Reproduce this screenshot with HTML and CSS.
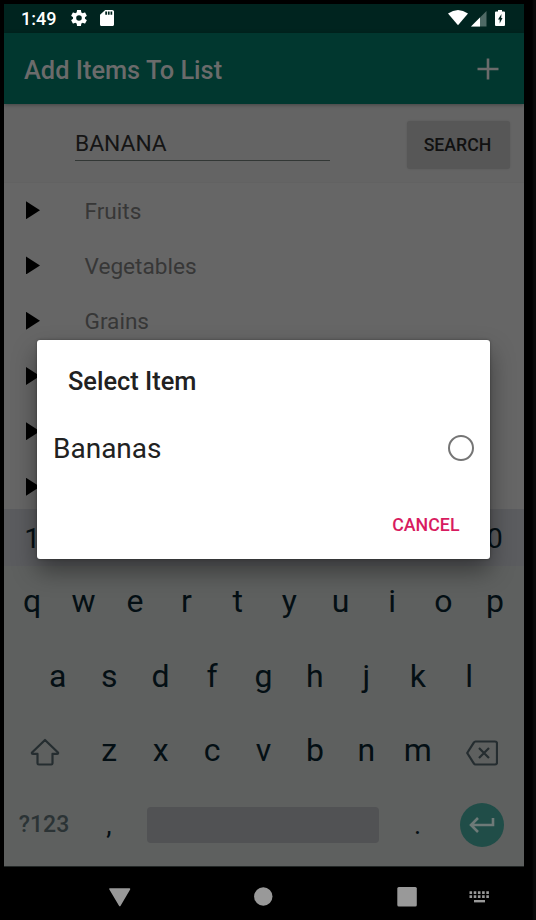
FILE: index.html
```html
<!DOCTYPE html>
<html lang="en">
<head>
<meta charset="utf-8">
<title>Add Items To List</title>
<link rel="stylesheet" href="styles.css">
</head>
<body>
<div class="phone">
  <header class="status">
    <span class="clock">1:49</span>
    <svg class="gear" width="20" height="20" viewBox="2 2 20 20"><path d="M19.43 12.98c.04-.32.07-.64.07-.98s-.03-.66-.07-.98l2.11-1.65c.19-.15.24-.42.12-.64l-2-3.46c-.12-.22-.39-.3-.61-.22l-2.49 1c-.52-.4-1.08-.73-1.69-.98l-.38-2.65C14.46 2.18 14.25 2 14 2h-4c-.25 0-.46.18-.49.42l-.38 2.65c-.61.25-1.17.59-1.69.98l-2.49-1c-.23-.09-.49 0-.61.22l-2 3.46c-.13.22-.07.49.12.64l2.11 1.65c-.04.32-.07.65-.07.98s.03.66.07.98l-2.11 1.65c-.19.15-.24.42-.12.64l2 3.46c.12.22.39.3.61.22l2.49-1c.52.4 1.08.73 1.69.98l.38 2.65c.03.24.24.42.49.42h4c.25 0 .46-.18.49-.42l.38-2.65c.61-.25 1.17-.59 1.69-.98l2.49 1c.23.09.49 0 .61-.22l2-3.46c.12-.22.07-.49-.12-.64zM12 15.5a3.5 3.5 0 1 1 0-7 3.5 3.5 0 0 1 0 7z"/></svg>
    <svg class="sd" width="14" height="16" viewBox="4 2 16 20" preserveAspectRatio="none"><path d="M18 2h-8L4.020 8 4 20c0 1.100.9 2 2 2h12c1.100 0 2-.9 2-2V4c0-1.100-.9-2-2-2zm-6 6h-2V4h2zm3 0h-2V4h2zm3 0h-2V4h2z"/></svg>
    <svg class="wifi" width="20" height="16" viewBox="0 0 20 16"><path d="M0 3.600Q10-3.400 20 3.600L10 15.300z"/></svg>
    <svg class="cell" width="16" height="16" viewBox="0 0 16 16"><path class="faint" d="M15.500 0v15.500H0z"/><path d="M9 6.500v9H0z"/></svg>
    <svg class="battery" width="10" height="17" viewBox="0 0 10 17"><path fill-rule="evenodd" d="M3 0h4v1.500h2q1 0 1 1V15q0 1-1 1H1q-1 0-1-1V2.500q0-1 1-1h2zM6.500 4 3 9.500h1.700v4L7.500 8H6.200z"/></svg>
  </header>
  <div class="appbar">
    <h1>Add Items To List</h1>
    <svg width="22" height="22" viewBox="0 0 22 22"><path d="M11 .5v21M.5 11h21"/></svg>
  </div>
  <div class="search">
    <div class="field">BANANA</div>
    <div class="button">SEARCH</div>
  </div>
  <ul class="list">
    <li><i></i><span>Fruits</span></li>
    <li><i></i><span>Vegetables</span></li>
    <li><i></i><span>Grains</span></li>
    <li><i></i></li>
    <li><i></i></li>
    <li><i></i></li>
  </ul>
  <div class="keyboard">
    <div class="keys digits"><span>1</span><span></span><span></span><span></span><span></span><span></span><span></span><span></span><span></span><span>0</span></div>
    <div class="keys"><span>q</span><span>w</span><span>e</span><span>r</span><span>t</span><span>y</span><span>u</span><span>i</span><span>o</span><span>p</span></div>
    <div class="keys middle"><span>a</span><span>s</span><span>d</span><span>f</span><span>g</span><span>h</span><span>j</span><span>k</span><span>l</span></div>
    <div class="keys">
      <span class="wide shift"><svg width="30" height="28" viewBox="0 0 30 28"><path d="M15 2 2 14.500Q1.500 15.800 3 15.800H7.500V25.200Q7.500 26.500 8.800 26.500H21.200Q22.500 26.500 22.500 25.200V15.800H27Q28.500 15.800 28 14.500z"/></svg></span>
      <span>z</span><span>x</span><span>c</span><span>v</span><span>b</span><span>n</span><span>m</span>
      <span class="wide erase"><svg width="32" height="26" viewBox="0 0 32 26"><path d="M9.500 1.500H29Q31 1.500 31 3.500V22.500Q31 24.500 29 24.500H9.500Q8.500 24.500 7.800 23.400L1.200 13 7.800 2.600Q8.500 1.500 9.500 1.500zM13 8l10 10M23 8 13 18"/></svg></span>
    </div>
    <div class="keys bottom">
      <span class="symbols">?123</span>
      <span class="comma">,</span>
      <span class="space"></span>
      <span class="dot">.</span>
      <span class="enter"><svg width="26" height="16" viewBox="0 0 26 16"><path d="M24 1v7H2.500M9 1 2 8l7 7"/></svg></span>
    </div>
  </div>
  <nav class="nav">
    <svg width="390" height="22" viewBox="0 0 390 22">
      <path d="M1 3H20.500L10.800 19.500z" stroke-width="1.500" stroke-linejoin="round"/>
      <circle cx="154.300" cy="10.500" r="9.200"/>
      <rect x="288.300" y="1" width="19.500" height="19.500" rx="1.500"/>
      <path class="dots" d="M360.500 6.600h20M360.500 10.600h20"/>
      <path class="bar" d="M365 15.200h11"/>
    </svg>
  </nav>
  <div class="dialog">
    <h2>Select Item</h2>
    <div class="option"><span>Bananas</span><i></i></div>
    <div class="cancel">CANCEL</div>
  </div>
</div>
</body>
</html>
```
FILE: styles.css
```css
* { box-sizing: border-box; }
body { margin: 0; background: #000; font-family: Roboto, "Liberation Sans", sans-serif; }
h1, h2, ul { margin: 0; padding: 0; }
.phone { position: relative; width: 536px; height: 920px; padding: 4px 12px 0 4px; overflow: hidden; background: linear-gradient(90deg, #000 532px, #0a0a0a 534px); }

.status { display: flex; height: 29px; padding: 6px 19px 0 17px; background: #00241f; color: #fff; fill: #fff; }
.clock { width: 50px; font-size: 18px; line-height: 18px; font-weight: 500; white-space: nowrap; }
.gear { width: 16px; height: 16px; }
.sd { margin: 0 0 0 13px; }
.wifi { margin-left: auto; }
.cell { margin: 1px 8px 0 3px; }
.faint { fill: #4f6965; }

.appbar { display: flex; align-items: center; justify-content: space-between; height: 71px; padding: 0 25px 0 20px; background: #01372f; color: #6b6b6b; position: relative; box-shadow: 0 1px 4px #0005; }
.appbar h1 { font-size: 25.4px; line-height: 30px; font-weight: 500; padding-top: 2px; }
.appbar svg { fill: none; stroke: #6b6b6b; stroke-width: 2.6; }

.search { display: flex; justify-content: space-between; height: 79px; padding: 17px 14px 0 71px; background: #646464; border-bottom: 1px solid #626262; }
.field { width: 255px; height: 40px; padding-top: 9px; border-bottom: 1px solid #323735; font-size: 22.8px; line-height: 27px; color: #151515; }
.button { width: 103px; height: 48px; padding-right: 2px; border-radius: 3px; background: #575757; color: #111; font-size: 17.700px; line-height: 49px; font-weight: 500; text-align: center; box-shadow: 0 0 2px #0002; }

.list { height: 326px; background: #666; list-style: none; overflow: hidden; }
.list li { display: flex; align-items: center; height: 55.3px; padding: 0 0 1px 22px; font-size: 22.600px; color: #373737; }
.list i { width: 14px; height: 18px; margin-right: 44.500px; background: #000; clip-path: polygon(0 0, 100% 50%, 0 100%); }
.list span { padding-top: 2px; }

.keyboard { height: 358px; background: #5e605f; border-bottom: 1px solid #222726; color: #040f14; }
.keys { display: flex; height: 74.6px; padding: 0 3.500px 0 2.500px; font-size: 32px; line-height: 71px; }
.keys span { flex: 1 1 0; text-align: center; }
.keys.digits { height: 57px; font-size: 28.500px; line-height: 60px; background: #5b5c5f; }
.keys.middle { padding: 0 29px 0 28px; }
.keys .wide { flex: 0 0 77.100px; display: flex; align-items: center; justify-content: center; }
.keys .shift { padding-right: 1px; }
.keys .erase { padding-top: 2px; }
.keys svg { fill: none; stroke: #252d30; stroke-width: 2.2; stroke-linejoin: round; }
.keys.bottom { align-items: center; height: 70px; padding: 0 20px 0 1px; }
.keys .symbols { flex: 0 0 78px; font-size: 23px; font-weight: 500; line-height: 72px; color: #2b3335; }
.keys .comma { flex: 0 0 64px; padding-right: 12px; font-size: 27px; line-height: 82px; }
.keys .space { flex: 0 0 232px; height: 36px; border-radius: 4px; background: #515254; }
.keys .dot { padding-right: 4px; font-size: 27px; line-height: 80px; }
.keys .enter { flex: 0 0 44px; display: flex; align-items: center; justify-content: center; height: 44px; border-radius: 50%; background: #204d48; }
.keys .enter svg { stroke: #6e7a78; stroke-width: 2.6; stroke-linejoin: miter; }

.nav { padding: 19px 0 0 105px; height: 53px; }
.nav svg { display: block; fill: #999; stroke: #999; stroke-width: 0; }
.nav .dots { stroke-width: 2.6; stroke-dasharray: 2.6 1.600; }
.nav .bar { stroke-width: 2.4; }

.dialog { position: absolute; left: 37px; top: 340px; width: 453px; height: 219px; border-radius: 3px; background: #fff; box-shadow: 0 12px 24px #0006, 0 0 3px #0005; color: #212121; }
.dialog h2 { padding: 26px 0 0 31px; font-size: 25.400px; line-height: 30px; font-weight: 500; }
.option { display: flex; align-items: center; justify-content: space-between; height: 61px; margin-top: 21px; padding: 0 16px; font-size: 28px; }
.option span { padding-top: 2px; }
.option i { width: 26px; height: 26px; border: 2.500px solid #757575; border-radius: 50%; }
.cancel { padding: 35px 30.500px 0; text-align: right; font-size: 17.800px; line-height: 23px; font-weight: 500; color: #d81b60; }
```
